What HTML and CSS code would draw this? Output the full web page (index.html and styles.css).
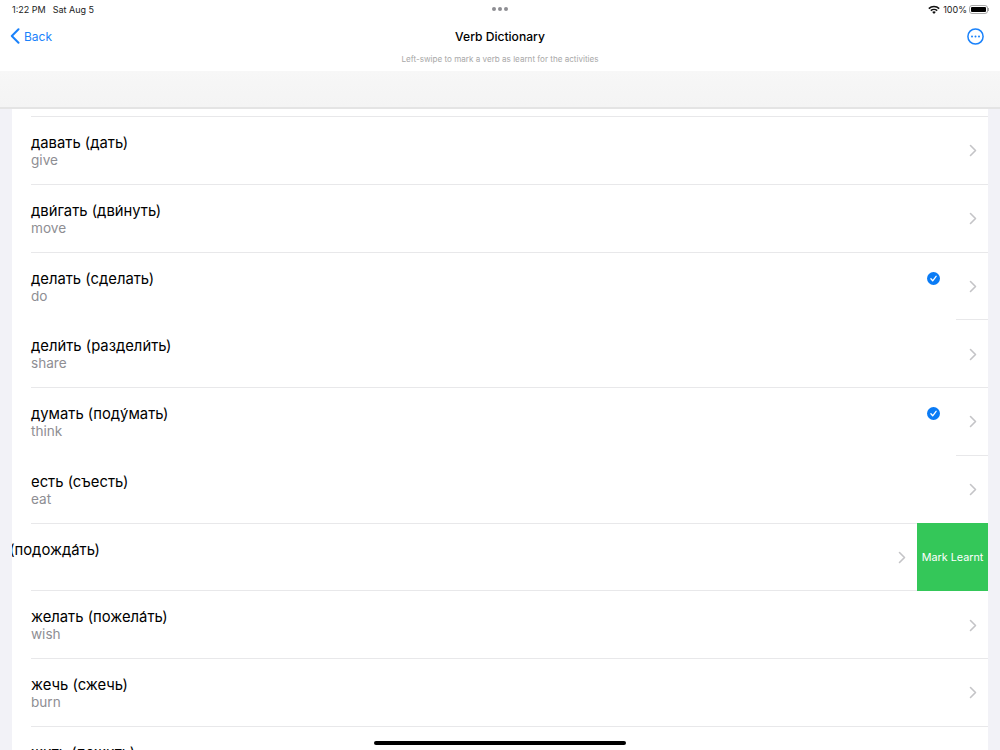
FILE: index.html
```html
<!DOCTYPE html>
<html>
  <head>
    <title>Verb Dictionary</title>
    <link rel="stylesheet" href="styles.css">
  </head>
  <body>
    <div class="screen">
      <div class="status">
        <div class="status-left"><span>1:22 PM</span><span>Sat Aug 5</span></div>
        <div class="status-dots"><i></i><i></i><i></i></div>
        <div class="status-right">
          <svg class="wifi" width="12" height="9" viewBox="0 0 12 9">
            <path d="M0.3 3.1a8.2 8.2 0 0 1 11.4 0l-1 1.1a6.8 6.8 0 0 0-9.4 0z"/>
            <path d="M2.3 5.1a5.4 5.4 0 0 1 7.4 0l-1 1.1a4 4 0 0 0-5.4 0z"/>
            <path d="M4.2 7.1a2.6 2.6 0 0 1 3.6 0L6 9z"/>
          </svg>
          <span>100%</span>
          <div class="battery"><div class="battery-fill"></div></div>
          <div class="battery-cap"></div>
        </div>
      </div>
      <div class="nav">
        <a class="back">
          <svg width="10" height="16" viewBox="0 0 10 16"><path d="M8.5 1.2 1.8 8l6.7 6.8" fill="none" stroke="#1a82fb" stroke-width="2" stroke-linecap="round" stroke-linejoin="round"/></svg>
          <span>Back</span>
        </a>
        <div class="nav-title">Verb Dictionary</div>
        <svg class="more" width="17" height="17" viewBox="0 0 17 17">
          <circle cx="8.5" cy="8.5" r="7.6" fill="none" stroke="#1a82fb" stroke-width="1.5"/>
          <circle cx="5" cy="8.5" r="1" fill="#1a82fb"/>
          <circle cx="8.5" cy="8.5" r="1" fill="#1a82fb"/>
          <circle cx="12" cy="8.5" r="1" fill="#1a82fb"/>
        </svg>
      </div>
      <div class="hint">Left-swipe to mark a verb as learnt for the activities</div>
      <div class="search-bar"></div>
      <div class="list">
        <div class="list-top"></div>

        <div class="row">
          <div class="row-main"><div class="row-text"><div class="verb">давать (дать)</div><div class="meaning">give</div></div></div>
          <div class="row-side"><svg class="chevron" width="8" height="13" viewBox="0 0 8 13"><path d="M1.5 1.5 6.5 6.5l-5 5" /></svg></div>
        </div>
        <div class="row">
          <div class="row-main"><div class="row-text"><div class="verb">дви́гать (дви́нуть)</div><div class="meaning">move</div></div></div>
          <div class="row-side"><svg class="chevron" width="8" height="13" viewBox="0 0 8 13"><path d="M1.5 1.5 6.5 6.5l-5 5" /></svg></div>
        </div>
        <div class="row row-learnt">
          <div class="row-main">
            <div class="row-text"><div class="verb">делать (сделать)</div><div class="meaning">do</div></div>
            <svg class="check" width="13" height="13" viewBox="0 0 13 13"><circle cx="6.5" cy="6.5" r="6.5" fill="#0a7bf5"/><path d="M3.9 6.8 5.7 8.8 9.1 4.3" fill="none" stroke="#fff" stroke-width="1.3" stroke-linecap="round" stroke-linejoin="round"/></svg>
          </div>
          <div class="row-side"><svg class="chevron" width="8" height="13" viewBox="0 0 8 13"><path d="M1.5 1.5 6.5 6.5l-5 5" /></svg></div>
        </div>
        <div class="row">
          <div class="row-main"><div class="row-text"><div class="verb">дели́ть (раздели́ть)</div><div class="meaning">share</div></div></div>
          <div class="row-side"><svg class="chevron" width="8" height="13" viewBox="0 0 8 13"><path d="M1.5 1.5 6.5 6.5l-5 5" /></svg></div>
        </div>
        <div class="row row-learnt">
          <div class="row-main">
            <div class="row-text"><div class="verb">думать (поду́мать)</div><div class="meaning">think</div></div>
            <svg class="check" width="13" height="13" viewBox="0 0 13 13"><circle cx="6.5" cy="6.5" r="6.5" fill="#0a7bf5"/><path d="M3.9 6.8 5.7 8.8 9.1 4.3" fill="none" stroke="#fff" stroke-width="1.3" stroke-linecap="round" stroke-linejoin="round"/></svg>
          </div>
          <div class="row-side"><svg class="chevron" width="8" height="13" viewBox="0 0 8 13"><path d="M1.5 1.5 6.5 6.5l-5 5" /></svg></div>
        </div>
        <div class="row">
          <div class="row-main"><div class="row-text"><div class="verb">есть (съесть)</div><div class="meaning">eat</div></div></div>
          <div class="row-side"><svg class="chevron" width="8" height="13" viewBox="0 0 8 13"><path d="M1.5 1.5 6.5 6.5l-5 5" /></svg></div>
        </div>
        <div class="row row-swiped">
          <div class="row-main"><div class="row-text"><div class="verb">ждать (подожда́ть)</div><div class="meaning">&nbsp;</div></div></div>
          <div class="row-side"><svg class="chevron" width="8" height="13" viewBox="0 0 8 13"><path d="M1.5 1.5 6.5 6.5l-5 5" /></svg></div>
          <div class="row-action">Mark Learnt</div>
        </div>
        <div class="row">
          <div class="row-main"><div class="row-text"><div class="verb">желать (пожела́ть)</div><div class="meaning">wish</div></div></div>
          <div class="row-side"><svg class="chevron" width="8" height="13" viewBox="0 0 8 13"><path d="M1.5 1.5 6.5 6.5l-5 5" /></svg></div>
        </div>
        <div class="row">
          <div class="row-main"><div class="row-text"><div class="verb">жечь (сжечь)</div><div class="meaning">burn</div></div></div>
          <div class="row-side"><svg class="chevron" width="8" height="13" viewBox="0 0 8 13"><path d="M1.5 1.5 6.5 6.5l-5 5" /></svg></div>
        </div>
        <div class="row">
          <div class="row-main"><div class="row-text"><div class="verb">жить (пожить)</div><div class="meaning">live</div></div></div>
          <div class="row-side"><svg class="chevron" width="8" height="13" viewBox="0 0 8 13"><path d="M1.5 1.5 6.5 6.5l-5 5" /></svg></div>
        </div>
      </div>
      <div class="home-bar"></div>
    </div>
  </body>
</html>
```

FILE: styles.css
```css
* {
    margin: 0;
    padding: 0;
    box-sizing: border-box;
}
html, body {
    height: 100%;
    overflow: hidden;
}
body {
    font-family: Inter, "Liberation Sans", sans-serif;
    background: #f2f2f7;
    color: #000;
}
.screen {
    position: relative;
    width: 1000px;
    height: 750px;
    overflow: hidden;
}
.status {
    display: flex;
    justify-content: space-between;
    align-items: center;
    height: 18px;
    padding: 0 11px 0 12px;
    background: #fff;
    font-size: 9px;
    color: #222;
}
.status-left {
    display: flex;
    gap: 7px;
    width: 200px;
}
.status-dots {
    display: flex;
    gap: 2px;
}
.status-dots i {
    width: 4px;
    height: 4px;
    border-radius: 50%;
    background: #8e8e93;
}
.status-right {
    display: flex;
    justify-content: flex-end;
    align-items: center;
    width: 201px;
    gap: 3px;
}
.wifi {
    fill: #111;
}
.battery {
    width: 19px;
    height: 9px;
    padding: 1px;
    margin-left: -1px;
    border: 1px solid #a9a9a9;
    border-radius: 3px;
}
.battery-fill {
    height: 100%;
    border-radius: 1px;
    background: #000;
}
.battery-cap {
    width: 1px;
    height: 3px;
    margin-left: -3px;
    background: #a9a9a9;
}
.nav {
    display: flex;
    justify-content: space-between;
    align-items: center;
    position: relative;
    height: 36px;
    padding: 0 16px 0 10px;
    background: #fff;
}
.back {
    display: flex;
    align-items: center;
    gap: 4px;
    font-size: 12px;
    color: #1a82fb;
}
.nav-title {
    position: absolute;
    left: 0;
    right: 0;
    text-align: center;
    font-size: 12.1px;
    font-weight: 500;
}
.hint {
    height: 17px;
    background: #fff;
    text-align: center;
    font-size: 8.1px;
    color: #a8a8a8;
}
.search-bar {
    height: 38px;
    background: linear-gradient(#f7f7f7, #f4f4f4);
    border-bottom: 2px solid #e4e4e4;
}
.list {
    margin: 0 12px;
    background: #fff;
}
.list-top {
    height: 8px;
    margin-left: 19px;
    border-bottom: 1px solid #e8e8ea;
}
.row {
    display: flex;
    height: 67.75px;
    background: #fff;
}
.row-main {
    display: flex;
    flex: 1;
    justify-content: space-between;
    min-width: 0;
    margin-left: 19px;
    padding: 16px 16px 0 0;
    border-bottom: 1px solid #e8e8ea;
}
.row-side {
    display: flex;
    align-items: center;
    width: 32px;
    padding: 1px 0 0 13px;
    border-bottom: 1px solid #e8e8ea;
}
.verb {
    height: 18px;
    line-height: 20px;
    font-size: 14.8px;
    white-space: nowrap;
}
.meaning {
    height: 18px;
    line-height: 19px;
    font-size: 13.6px;
    color: #8e8e93;
}
.chevron {
    fill: none;
    stroke: #c4c4c7;
    stroke-width: 1.6;
    stroke-linecap: round;
    stroke-linejoin: round;
}
.check {
    margin-top: 3px;
}
.row-learnt .row-main {
    border-bottom-color: #fff;
}
.row-swiped {
    clip-path: inset(-1px 0 0 0);
    background: linear-gradient(#e8e8ea, #e8e8ea) 19px 100% / 100% 1px no-repeat #fff;
}
.row-swiped .row-main {
    margin-left: -52px;
    border-bottom: 0;
}
.row-swiped .row-side {
    border-bottom: 0;
}
.row-action {
    display: flex;
    justify-content: center;
    align-items: center;
    width: 71px;
    margin-top: -1px;
    padding-top: 1px;
    background: #34c759;
    color: #fff;
    font-size: 10.8px;
}
.home-bar {
    position: absolute;
    left: 374px;
    bottom: 5px;
    width: 252px;
    height: 4px;
    border-radius: 2px;
    background: #000;
}
```
